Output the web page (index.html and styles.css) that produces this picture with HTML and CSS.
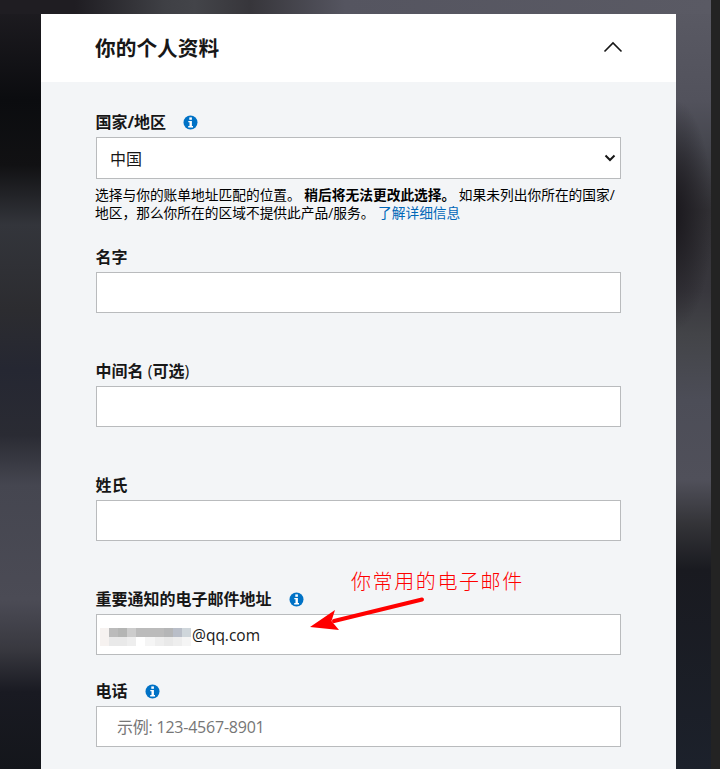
FILE: index.html
```html
<!DOCTYPE html>
<html lang="zh-CN">
<head>
<meta charset="utf-8">
<title>你的个人资料</title>
<link rel="stylesheet" href="styles.css">
</head>
<body>
<svg class="symbols" aria-hidden="true"><symbol id="info" viewBox="0 0 15 15"><circle cx="7.5" cy="7.5" r="7" fill="#0072c6"/><rect x="6.3" y="2.4" width="2.6" height="2.4" fill="#fff"/><path d="M5.3 6h3.6v5H10v1.4H5.2V11h1.3V7.3H5.3z" fill="#fff"/></symbol></svg>
<div class="page">
<main class="card">
<header class="card-header"><h1>你的个人资料</h1>
<svg class="collapse" viewBox="0 0 20 12"><path d="M1.5 10.5 10 2l8.5 8.5"/></svg></header>
<form class="form">
<section class="field country"><div class="label"><label>国家/地区</label><svg class="info"><use href="#info"/></svg></div>
<div class="control select"><span>中国</span><svg class="chevron" viewBox="0 0 12 8"><path d="m1.5 1.5 4.5 4.5 4.5-4.5"/></svg></div>
<p class="help">选择与你的账单地址匹配的位置。 <b>稍后将无法更改此选择。</b> 如果未列出你所在的国家/<br>地区，那么你所在的区域不提供此产品/服务。 <a>了解详细信息</a></p></section>
<section class="field"><div class="label"><label>名字</label></div><div class="control"></div></section>
<section class="field"><div class="label"><label>中间名 <span class="optional">(</span>可选<span class="optional">)</span></label></div><div class="control"></div></section>
<section class="field"><div class="label"><label>姓氏</label></div><div class="control"></div></section>
<section class="field email"><div class="label"><label>重要通知的电子邮件地址</label><svg class="info"><use href="#info"/></svg></div>
<div class="control address"><svg class="mosaic" viewBox="0 0 91 18" shape-rendering="crispEdges"><path fill="#f6f2f0" d="M0 0h9v18H0z"/><path fill="#bbb" d="M9 0h9v9H9z"/><path fill="#b4b5b4" d="M18 0h9v9h-9z"/><path fill="#ccc" d="M27 0h9v9h-9z"/><path fill="#bbb" d="M36 0h28v9H36z"/><path fill="#b5b6b7" d="M64 0h9v9h-9z"/><path fill="#b9bec8" d="M73 0h9v9h-9z"/><path fill="#cfd6db" d="M82 0h9v9h-9z"/><path fill="#e9e9e9" d="M9 9h18v9H9zm55 0h9v9h-9z"/><path fill="#eee" d="M27 9h9v9h-9zm28 0h9v9h-9zm18 0h9v9h-9z"/><path fill="#f5f5f5" d="M45 9h10v9H45zm37 0h9v9h-9z"/></svg><span>@qq.com</span></div>
<div class="note">你常用的电子邮件</div>
<svg class="arrow" viewBox="0 0 120 40"><path d="m112 5.5-88 21.5" stroke="red" stroke-width="4" stroke-linecap="round"/><path fill="red" d="m0 33 25-17-3.5 11L29 36z"/></svg></section>
<section class="field"><div class="label"><label>电话</label><svg class="info"><use href="#info"/></svg></div><div class="control phone">示例: 123-4567-8901</div></section>
</form>
</main>
</div>
</body>
</html>
```
FILE: styles.css
```css
* { box-sizing: border-box; }
body { margin: 0; overflow: hidden; font-family: "Open Sans", "Noto Sans CJK SC", sans-serif; color: #171717; }
.symbols { display: none; }
.page {
  height: 769px; padding: 14px 35px 0 41px; border-right: 9px solid #232323;
  background:
    linear-gradient(90deg, #1f1d22, #1f1d22 75px, #3f4045 165px, #434449 195px, #37363b 250px, #555560 345px, #5a5a64) top / 100% 14px no-repeat,
    linear-gradient(#1f1d22, #0b0c0f 100px, #111113 165px, #33353b 225px, #2c2c30 310px, #252732 370px, #2a2b33 435px, #454650 485px, #4b4b55 600px, #38383f 650px, #191a22 692px, #14161b 769px) left / 50% 100% no-repeat,
    radial-gradient(ellipse 38px 115px at 675px 215px, #1d1b20 10%, #1d1b2000 100%),
    linear-gradient(#5a5a64, #52525c 100px, #46474f 145px, #323135 210px, #38373d 290px, #434448 335px, #4c4d57 400px, #50505a 480px, #333337 525px, #191a20 570px, #1c212b 769px) right / 50% 100% no-repeat;
}
.card { height: 755px; background: #f3f5f7; overflow: hidden; }
.card-header { height: 68px; padding: 0 53px 0 54px; display: flex; align-items: center; justify-content: space-between; background: #fff; }
h1 { margin: 0; font-size: 20.7px; line-height: 30px; font-weight: 700; }
.collapse { width: 20px; height: 12px; margin-bottom: 2px; fill: none; stroke: #171717; stroke-width: 1.6; }
.form { padding: 27px 55px 0; }
.field { position: relative; height: 114px; }
.country { height: 135px; }
.email { height: 92px; }
.label { height: 28px; margin-left: -.5px; padding-bottom: 2px; display: flex; align-items: center; gap: 17px; font-size: 16px; line-height: 24px; font-weight: 700; }
.optional { font-weight: 400; }
.info { width: 15px; height: 15px; }
.control { width: 525px; height: 41px; border: 1px solid #b9bbbd; background: #fff; display: flex; align-items: center; font-size: 16px; }
.select { height: 42px; padding: 0 4px 0 13px; justify-content: space-between; }
.chevron { width: 12px; height: 8px; fill: none; stroke: #171717; stroke-width: 2; }
.help { margin: 7px -10px 0 -1px; font-size: 13.72px; line-height: 18px; color: #000; white-space: nowrap; }
.help a { color: #0067b8; }
.address { padding: 3px 0 0 3px; font-size: 15.5px; }
.address span { margin-top: -2px; }
.mosaic { width: 91px; height: 18px; margin: 2px 1px 0 0; }
.phone { padding: 0 0 1px 20px; color: #767676; letter-spacing: -.22px; }
.note { position: absolute; left: 255px; top: -18px; color: red; font-size: 20px; line-height: 28px; letter-spacing: 1.6px; font-weight: 300; }
.arrow { position: absolute; left: 214px; top: 8px; width: 120px; height: 40px; }
```
